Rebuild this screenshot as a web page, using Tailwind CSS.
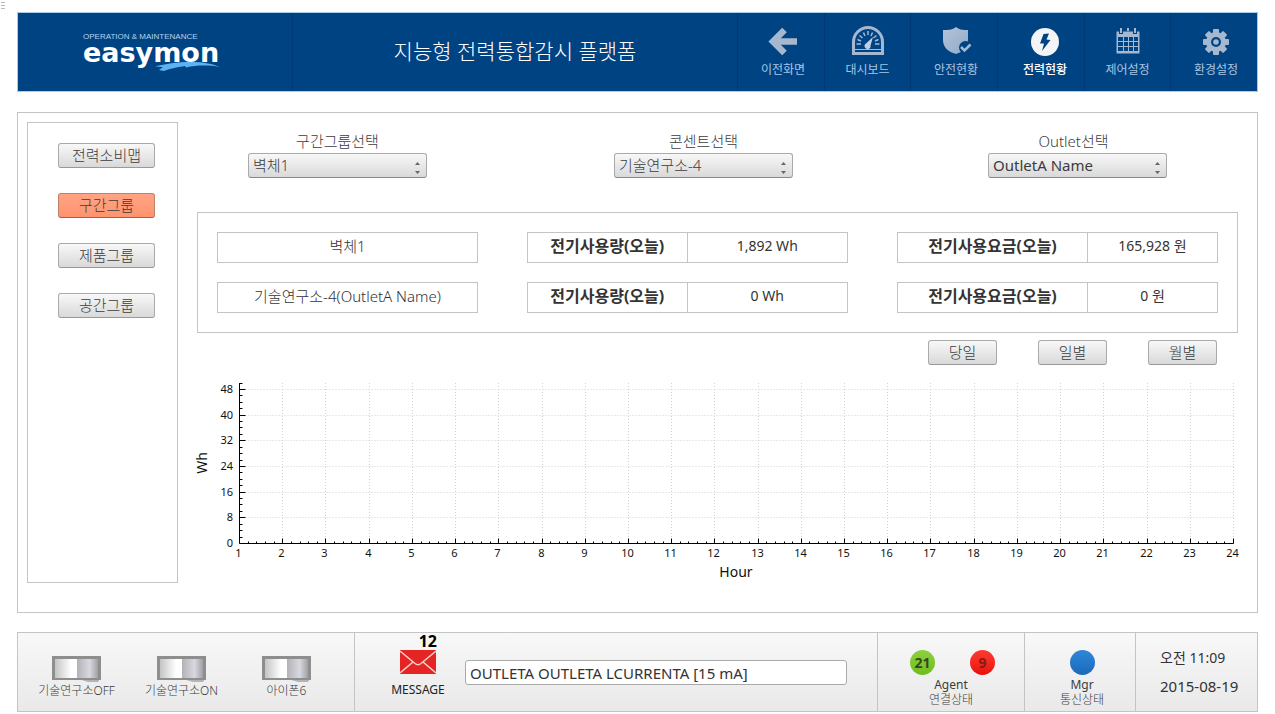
<!DOCTYPE html>
<html lang="ko">
<head>
<meta charset="utf-8">
<meta name="viewport" content="width=device-width, initial-scale=1">
<title>easymon</title>
<script src="https://cdn.jsdelivr.net/npm/@tailwindcss/browser@4"></script>
</head>
<body class="bg-white font-['Noto_Sans','Noto_Sans_CJK_KR',sans-serif] text-[#3c3c3c]">
<div class="absolute left-0 top-0 flex flex-col gap-[2px] pt-[2px] pl-px" aria-hidden="true">
  <span class="h-px w-1 bg-[#bbb]"></span><span class="h-px w-1 bg-[#bbb]"></span><span class="h-px w-1 bg-[#bbb]"></span>
</div>
<div class="flex flex-col px-[17px] pt-3">

<header class="flex h-20 items-stretch border border-[#a9cbea] bg-[#004383] text-white">
  <div class="w-[275px] shrink-0 border-r border-[#003a74] pt-5 pl-[65px]">
    <a href="#" class="relative block w-[140px]">
      <span class="block h-2 text-[8px] leading-2 font-['Liberation_Sans',sans-serif] text-[#b5d3ee] whitespace-nowrap">OPERATION &amp; MAINTENANCE</span>
      <span class="block text-[27px] leading-6 font-bold font-['DejaVu_Sans',sans-serif]">easymon</span>
      <svg class="absolute left-[72px] top-[29px]" width="66" height="9" viewBox="0 0 66 9"><path d="M0 4.500C10 2 22 0 36 0C49 0 58 2 65 5C54 3 42 3 31 5.500L30 4C22 5 14 7 9 9L4 8L8 5Z" fill="#5cb3f3"/></svg>
    </a>
  </div>
  <h1 class="flex flex-1 items-center justify-center text-[21px] font-light">지능형 전력통합감시 플랫폼</h1>
  <nav class="flex shrink-0 text-xs leading-4 text-[#a9c5e2]">
    <a href="#" class="flex w-[87px] flex-col items-center gap-[5px] border-l border-[#003a74] pt-3 pl-1">
      <svg width="32" height="32" viewBox="0 0 32 32"><defs><linearGradient id="g" x1="0" y1="0" x2="1" y2="1"><stop offset="0" stop-color="#b4c3d6"/><stop offset="1" stop-color="#8fabcc"/></linearGradient></defs><path d="M17.500 5L6 16.500L17.500 28M7 16.500H30" fill="none" stroke="#a5b8d0" stroke-width="6.500"/></svg>
      <span>이전화면</span></a>
    <a href="#" class="flex w-[86px] flex-col items-center gap-[5px] border-l border-[#003a74] pt-3">
      <svg width="32" height="32" viewBox="0 0 32 32"><path d="M1.500 28.500V17A14.500 14.500 0 0 1 30.500 17V28.500Z" fill="none" stroke="#a5b8d0" stroke-width="3"/><g stroke="#a5b8d0" stroke-width="1.500"><path d="M4.500 19H9M27.500 19H23M16 6V10M7.500 10.500L10.500 13M24.500 10.500L21.500 13M11.500 7.500L13 11M20.500 7.500L19 11M5.500 14.500L9 16M26.500 14.500L23 16"/></g><path d="M21 12L18.500 20.500A3 3 0 1 1 14 18.500Z" fill="#c3d0e0"/><path d="M3 24.500H29" stroke="#a5b8d0"/></svg>
      <span>대시보드</span></a>
    <a href="#" class="flex w-[87px] flex-col items-center gap-[5px] border-l border-[#003a74] pt-3 pl-1">
      <svg width="32" height="32" viewBox="0 0 32 32"><path d="M16 2C20 5 23 5 28 5V15C28 22 23 27 16 29C8 27 3 22 3 15V5C9 5 12 5 16 2Z" fill="url(#g)"/><circle cx="25.500" cy="22.500" r="6.500" fill="#004383"/><path d="M21 22L24.500 25.500L30.500 19.500" fill="none" stroke="#a5b8d0" stroke-width="2.500"/></svg>
      <span>안전현황</span></a>
    <a href="#" aria-current="page" class="flex w-[87px] flex-col items-center gap-[5px] border-l border-[#003a74] pt-3 pl-2 font-medium text-white">
      <svg width="32" height="32" viewBox="0 0 32 32"><circle cx="16" cy="17" r="14" fill="#f2f4f6"/><path d="M14.500 9L20 8.500L17.500 14.500L21.500 15L13 26L15 18.500L11 18.500Z" fill="#004383"/></svg>
      <span>전력현황</span></a>
    <a href="#" class="flex w-[86px] flex-col items-center gap-[5px] border-l border-[#003a74] pt-3">
      <svg width="32" height="32" viewBox="0 0 32 32"><path d="M4.500 6.500H27.500V28.500H4.500Z" fill="#a5b8d0"/><g fill="#004383"><path d="M6 12h5v4H6zM12 12h4v4h-4zM17 12h4v4h-4zM22 12h4v4h-4zM6 17h5v4H6zM12 17h4v4h-4zM17 17h4v4h-4zM22 17h4v4h-4zM6 22h5v4H6zM12 22h4v4h-4zM17 22h4v4h-4zM22 22h4v4h-4z"/><path d="M7 2h4v7H7zM21 2h4v7h-4z"/></g><path d="M9 3V8M23 3V8M16 3V6" stroke="#a5b8d0" stroke-width="2"/></svg>
      <span>제어설정</span></a>
    <a href="#" class="flex w-[87px] flex-col items-center gap-[5px] border-l border-[#003a74] pt-3 pl-1">
      <svg width="32" height="32" viewBox="0 0 32 32"><g fill="#a5b8d0"><circle cx="16" cy="17" r="10"/><g id="t"><rect x="13" y="4" width="6" height="26" rx="1"/><rect x="3" y="14" width="26" height="6" rx="1"/></g><use href="#t" transform="rotate(45 16 17)"/></g><circle cx="16" cy="17" r="5" fill="#004383"/><circle cx="16" cy="17" r="2.800" fill="#a5b8d0"/></svg>
      <span>환경설정</span></a>
  </nav>
</header>

<main class="mt-5 flex gap-[19px] border border-[#c4c4c4] pt-[9px] pr-[19px] pb-[29px] pl-[9px]">
  <aside class="flex w-[151px] shrink-0 flex-col items-center gap-[25px] border border-[#c4c4c4] pt-5 pl-2 text-[15px]">
    <button class="h-[25px] w-[97px] rounded-[3px] border border-[#aaa] border-b-[#999] bg-linear-to-b from-[#f8f8f8] to-[#d9d9d9] leading-[23px] font-light">전력소비맵</button>
    <button class="h-[25px] w-[97px] rounded-[3px] border border-[#b98468] border-b-[#94664f] bg-linear-to-b from-[#ffa485] to-[#ff936e] leading-[23px] font-light">구간그룹</button>
    <button class="h-[25px] w-[97px] rounded-[3px] border border-[#aaa] border-b-[#999] bg-linear-to-b from-[#f8f8f8] to-[#d9d9d9] leading-[23px] font-light">제품그룹</button>
    <button class="h-[25px] w-[97px] rounded-[3px] border border-[#aaa] border-b-[#999] bg-linear-to-b from-[#f8f8f8] to-[#d9d9d9] leading-[23px] font-light">공간그룹</button>
  </aside>

  <section class="flex min-w-0 flex-1 flex-col">
    <div class="flex justify-between pt-2 pr-[71px] pl-[51px] text-[15px]">
      <div class="w-[179px]">
        <label for="s1" class="block h-[23px] text-center leading-[22px] font-light">구간그룹선택</label>
        <div class="relative">
          <select id="s1" class="block h-[25px] w-full appearance-none rounded-[3px] border border-[#aaa] border-b-[#888] bg-linear-to-b from-[#f8f8f8] to-[#d9d9d9] pl-1 leading-[23px] font-light"><option>벽체1</option></select>
          <svg class="pointer-events-none absolute right-[6px] top-2" width="7" height="14" viewBox="0 0 7 14"><path d="M1 4L3.500 1L6 4ZM1 10L3.500 13L6 10Z" fill="#666"/></svg>
        </div>
      </div>
      <div class="mr-2 w-[179px]">
        <label for="s2" class="block h-[23px] text-center leading-[22px] font-light">콘센트선택</label>
        <div class="relative">
          <select id="s2" class="block h-[25px] w-full appearance-none rounded-[3px] border border-[#aaa] border-b-[#888] bg-linear-to-b from-[#f8f8f8] to-[#d9d9d9] pl-1 leading-[23px] font-light"><option>기술연구소-4</option></select>
          <svg class="pointer-events-none absolute right-[6px] top-2" width="7" height="14" viewBox="0 0 7 14"><path d="M1 4L3.500 1L6 4ZM1 10L3.500 13L6 10Z" fill="#666"/></svg>
        </div>
      </div>
      <div class="w-[179px]">
        <label for="s3" class="block h-[23px] pr-2 text-center leading-[22px] font-light">Outlet선택</label>
        <div class="relative">
          <select id="s3" class="block h-[25px] w-full appearance-none rounded-[3px] border border-[#aaa] border-b-[#888] bg-linear-to-b from-[#f8f8f8] to-[#d9d9d9] pl-1 text-[15px] leading-[23px]"><option>OutletA Name</option></select>
          <svg class="pointer-events-none absolute right-[6px] top-2" width="7" height="14" viewBox="0 0 7 14"><path d="M1 4L3.500 1L6 4ZM1 10L3.500 13L6 10Z" fill="#666"/></svg>
        </div>
      </div>
    </div>

    <div class="mt-[34px] grid grid-cols-[261fr_321fr_321fr] gap-x-[49px] gap-y-[19px] border border-[#c4c4c4] p-[19px] text-center text-sm leading-[26px] text-[#333]">
      <div class="h-[31px] border border-[#c4c4c4] text-[15px] leading-[26px] font-light">벽체1</div>
      <dl class="grid h-[31px] grid-cols-2 border border-[#c4c4c4]"><dt class="border-r border-[#c4c4c4] text-base leading-[27px] font-bold">전기사용량(오늘)</dt><dd>1,892 Wh</dd></dl>
      <dl class="grid h-[31px] grid-cols-[190fr_129fr] border border-[#c4c4c4]"><dt class="border-r border-[#c4c4c4] text-base leading-[27px] font-bold">전기사용요금(오늘)</dt><dd>165,928 원</dd></dl>
      <div class="h-[31px] border border-[#c4c4c4] text-[15px] leading-[26px] font-light">기술연구소-4(OutletA Name)</div>
      <dl class="grid h-[31px] grid-cols-2 border border-[#c4c4c4]"><dt class="border-r border-[#c4c4c4] text-base leading-[27px] font-bold">전기사용량(오늘)</dt><dd>0 Wh</dd></dl>
      <dl class="grid h-[31px] grid-cols-[190fr_129fr] border border-[#c4c4c4]"><dt class="border-r border-[#c4c4c4] text-base leading-[27px] font-bold">전기사용요금(오늘)</dt><dd>0 원</dd></dl>
    </div>

    <div class="mt-[7px] flex justify-end gap-[41px] pr-[21px] text-[15px]">
      <button class="h-[25px] w-[69px] rounded-[3px] border border-[#aaa] border-b-[#999] bg-linear-to-b from-[#f8f8f8] to-[#d9d9d9] leading-[23px] font-light">당일</button>
      <button class="h-[25px] w-[69px] rounded-[3px] border border-[#aaa] border-b-[#999] bg-linear-to-b from-[#f8f8f8] to-[#d9d9d9] leading-[23px] font-light">일별</button>
      <button class="h-[25px] w-[69px] rounded-[3px] border border-[#aaa] border-b-[#999] bg-linear-to-b from-[#f8f8f8] to-[#d9d9d9] leading-[23px] font-light">월별</button>
    </div>
    <svg id="chart" class="mt-[10px] block h-auto w-full overflow-visible text-[11px]" viewBox="0 0 1041 208" fill="#111" role="img" aria-label="Wh / Hour">
      <text x="539" y="202" text-anchor="middle" font-size="14">Hour</text>
      <text transform="translate(10 88) rotate(-90)" text-anchor="middle" font-size="14">Wh</text>
    </svg>
  </section>
</main>

<footer class="mt-[19px] flex h-20 items-stretch border border-[#c4c4c4] bg-linear-to-b from-[#f8f8f8] to-[#e9e9e9] text-xs leading-4">
  <svg width="0" height="0" class="absolute"><defs><linearGradient id="k1"><stop offset="0" stop-color="#c4c4c4"/><stop offset=".7" stop-color="#fff"/></linearGradient><linearGradient id="k2"><stop offset="0" stop-color="#b2b2b6"/><stop offset=".6" stop-color="#d8d8e0"/><stop offset="1" stop-color="#a0a0a4"/></linearGradient>
  <symbol id="sw" viewBox="0 0 49 27"><path d="M26 23H48L46 26H36Z" fill="#b4b4b4"/><path d="M0 0H49V24H0Z" fill="#8e8e8e"/><rect x="3" y="3" width="23" height="19" fill="url(#k1)"/><rect x="25" y="3" width="21" height="19" fill="url(#k2)"/></symbol></defs></svg>
  <div class="flex w-[337px] shrink-0 border-r border-[#c4c4c4] pt-[23px] pl-[6px]">
    <button class="flex w-[105px] flex-col items-center font-light"><svg width="49" height="27"><use href="#sw"/></svg>기술연구소OFF</button>
    <button class="flex w-[105px] flex-col items-center font-light"><svg width="49" height="27"><use href="#sw"/></svg>기술연구소ON</button>
    <button class="flex w-[105px] flex-col items-center font-light"><svg width="49" height="27"><use href="#sw"/></svg>아이폰6</button>
  </div>
  <div class="flex flex-1 border-r border-[#c4c4c4] pr-[30px] pl-9">
    <button class="relative flex w-[54px] shrink-0 flex-col items-center pt-[17px] text-[#222]">
      <span class="absolute right-[8px] top-0 text-base leading-4 font-bold text-black">12</span>
      <svg width="36" height="24" viewBox="0 0 36 24"><path d="M0 0H36V24H0Z" fill="#e52523"/><path d="M0 1L15 13.500Q18 16 21 13.500L36 1M0 23L13 12M36 23L23 12" fill="none" stroke="#fbd2cd" stroke-width="1.500"/></svg>
      <span class="mt-2">MESSAGE</span>
    </button>
    <input aria-label="MESSAGE" value="OUTLETA OUTLETA LCURRENTA [15 mA]" class="mt-[27px] ml-[20px] h-[25px] min-w-0 flex-1 rounded-[3px] border border-[#aaa] bg-white px-1 text-[15px] text-[#333]">
  </div>
  <div class="flex w-[147px] shrink-0 flex-col items-center border-r border-[#c4c4c4] pt-[17px]">
    <div class="flex gap-[35px] pl-[3px] text-sm leading-[25px] font-bold text-[#33471f]">
      <span class="size-[25px] rounded-full bg-linear-to-b from-[#8ed03c] to-[#6fbd1e] text-center">21</span>
      <span class="size-[25px] rounded-full bg-linear-to-b from-[#ff3a30] to-[#e80d08] text-center text-[#8c1a10]">9</span>
    </div>
    <span class="mt-[2px]">Agent</span><span class="leading-[14px] font-light">연결상태</span>
  </div>
  <div class="flex w-[111px] shrink-0 flex-col items-center border-r border-[#c4c4c4] pt-[17px] pl-1">
    <span class="size-[25px] rounded-full bg-linear-to-b from-[#2f87d8] to-[#1a69bb]"></span>
    <span class="mt-[2px]">Mgr</span><span class="leading-[14px] font-light">통신상태</span>
  </div>
  <div class="flex w-[121px] shrink-0 flex-col pt-[11px] pl-6 text-[15px] leading-7 whitespace-nowrap text-[#333]">
    <time class="text-sm leading-7">오전 11:09</time><time datetime="2015-08-19">2015-08-19</time>
  </div>
</footer>
</div>

<script>
const svg = document.getElementById('chart');
const add = (tag, attrs, text) => {
  const el = document.createElementNS('http://www.w3.org/2000/svg', tag);
  for (const k in attrs) el.setAttribute(k, attrs[k]);
  if (text !== undefined) el.textContent = text;
  svg.appendChild(el);
};
const L = 42.5, R = 1036.5, T = 8, B = 168.5;
const sx = h => Math.round(L + (h - 1) * (R - L) / 23 - 0.5) + 0.5;
const sy = v => Math.round(B - v * 3.21 - 0.5) + 0.5;
let grid = '', axis = `M${L} ${T}V${B}H${R}`;
for (let h = 2; h <= 24; h++) grid += `M${sx(h)} ${T}V${B}`;
for (let v = 8; v <= 48; v += 8) grid += `M${L} ${sy(v)}H${R}`;
for (let v = 2; v <= 50; v += 2) axis += `M${L} ${sy(v)}h${v % 8 ? 3 : 6}`;
for (let i = 0; i <= 115; i++) axis += `M${sx(1 + i / 5)} ${B}v${i % 5 ? -2 : -5}`;
add('path', { d: grid, fill: 'none', stroke: '#d2d2d2', 'stroke-dasharray': '1 2' });
add('path', { d: axis, fill: 'none', stroke: '#000' });
for (let h = 1; h <= 24; h++) add('text', { x: sx(h) - 1, y: 182, 'text-anchor': 'middle' }, h);
for (let v = 0; v <= 48; v += 8) add('text', { x: 36, y: sy(v) + 3, 'text-anchor': 'end' }, v);
</script>
</body>
</html>
